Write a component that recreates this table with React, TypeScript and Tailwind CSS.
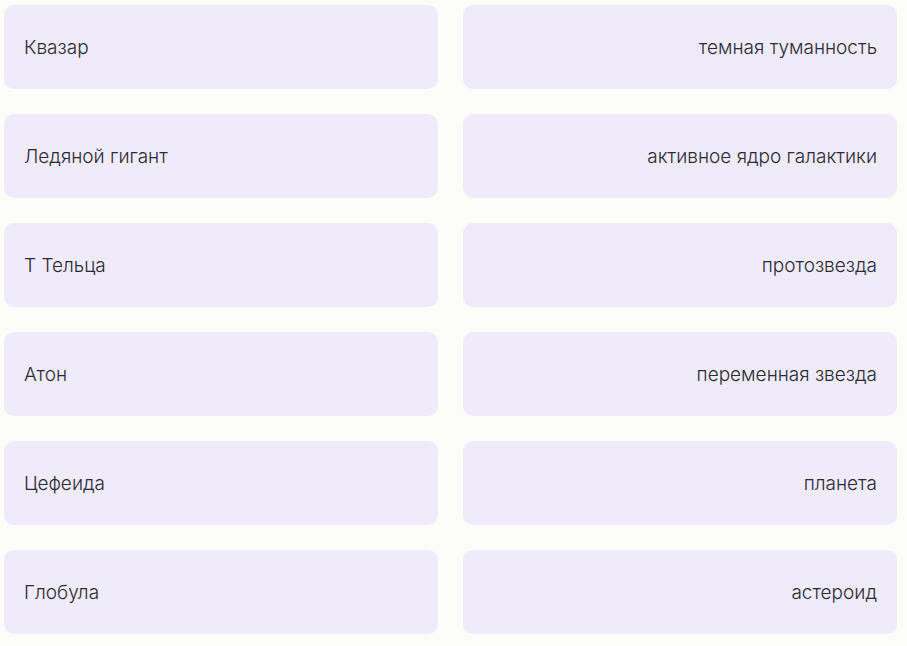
const left = ["Квазар", "Ледяной гигант", "Т Тельца", "Атон", "Цефеида", "Глобула"];
const right = [
  "темная туманность",
  "активное ядро галактики",
  "протозвезда",
  "переменная звезда",
  "планета",
  "астероид",
];

export default function App() {
  return (
    <main
      className="min-h-screen bg-[#fcfcf8] pl-[4px] pr-[10px] pt-[5px] pb-[12px]"
      style={{ fontFamily: "Inter, 'Noto Sans', sans-serif" }}
    >
      <div className="grid grid-cols-2 gap-x-[25px] gap-y-[25px]">
        {left.map((item, i) => (
          <>
            <div
              key={"l" + i}
              className="h-[84px] rounded-[10px] bg-[#f0ebfa] px-5 pt-[2px] flex items-center text-[19px] font-[350] text-[#2a2a36]"
            >
              {item}
            </div>
            <div
              key={"r" + i}
              className="h-[84px] rounded-[10px] bg-[#f0ebfa] px-5 pt-[2px] flex items-center justify-end text-[19px] font-[350] text-[#2a2a36]"
            >
              {right[i]}
            </div>
          </>
        ))}
      </div>
    </main>
  );
}
